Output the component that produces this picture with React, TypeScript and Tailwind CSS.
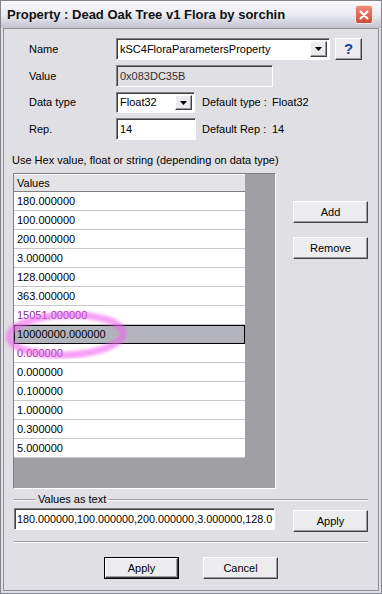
import React from "react";

const sunken =
  "border border-t-[#808080] border-l-[#808080] border-b-white border-r-white shadow-[inset_1px_1px_0_#404040]";
const raised =
  "border border-t-white border-l-white border-b-[#404040] border-r-[#404040] shadow-[inset_-1px_-1px_0_#9a9aa2] bg-[#ececef]";

const values = [
  "180.000000",
  "100.000000",
  "200.000000",
  "3.000000",
  "128.000000",
  "363.000000",
  "15051.000000",
  "10000000.000000",
  "0.000000",
  "0.000000",
  "0.100000",
  "1.000000",
  "0.300000",
  "5.000000",
];

const Arrow: React.FC = () => (
  <div className={`w-[17px] h-full flex items-center justify-center ${raised}`}>
    <svg width="7" height="4" viewBox="0 0 7 4">
      <polygon points="0,0 7,0 3.5,4" fill="#000" />
    </svg>
  </div>
);

const Btn: React.FC<{ label: string; className?: string }> = ({ label, className }) => (
  <div className={`w-[75px] h-[22px] flex items-center justify-center ${raised} ${className ?? ""}`}>
    {label}
  </div>
);

const Etched: React.FC<{ className?: string }> = ({ className }) => (
  <div className={`h-0 border-t border-b border-t-[#9d9da5] border-b-white ${className ?? ""}`} />
);

export default function App() {
  return (
    <div className="relative w-[382px] h-[594px] flex flex-col border border-[#84848c] bg-[#e0dfe3] text-[11px] text-black font-['Liberation_Sans',Arial,sans-serif]">
      {/* title bar */}
      <div className="h-[27px] shrink-0 flex items-center justify-between pl-[6px] pr-[8px] bg-linear-to-b from-[#fafafc] via-[#ebebf1] to-[#c3c3d1]">
        <span className="text-[13px] font-bold text-[#111] tracking-[0px]">
          Property : Dead Oak Tree v1 Flora by sorchin
        </span>
        <div className="w-[18px] h-[19px] rounded-[3px] border border-[#f4e4e0] bg-linear-to-b from-[#ec8b78] to-[#cf4a35] flex items-center justify-center">
          <svg width="10" height="10" viewBox="0 0 10 10">
            <path d="M1.5 1.5 L8.5 8.5 M8.5 1.5 L1.5 8.5" stroke="#fff" strokeWidth="2" strokeLinecap="round" />
          </svg>
        </div>
      </div>

      <div className="flex-1 flex px-[2px] pb-[2px]">
        <div className="flex-1 flex flex-col border border-[#8e8e96] bg-[#e0dfe3]">
          {/* form */}
          <div className="flex flex-col gap-[5px] pt-[9px]">
            <div className="h-[22px] flex items-center">
              <span className="w-[112px] pl-[25px]">Name</span>
              <div className={`w-[214px] h-[22px] bg-white flex items-center p-[2px] ${sunken}`}>
                <span className="flex-1 pl-[1px]">kSC4FloraParametersProperty</span>
                <Arrow />
              </div>
              <div className={`ml-[5px] w-[27px] h-[22px] flex items-center justify-center ${raised}`}>
                <span className="text-[15px] font-bold text-[#1c3fa8]">?</span>
              </div>
            </div>
            <div className="h-[22px] flex items-center">
              <span className="w-[112px] pl-[25px]">Value</span>
              <div className={`w-[157px] h-[22px] flex items-center pl-[3px] text-[#303030] ${sunken}`}>
                0x083DC35B
              </div>
            </div>
            <div className="h-[21px] flex items-center">
              <span className="w-[112px] pl-[25px]">Data type</span>
              <div className={`w-[79px] h-[21px] bg-white flex items-center p-[2px] ${sunken}`}>
                <span className="flex-1 pl-[1px]">Float32</span>
                <Arrow />
              </div>
              <span className="ml-[7px] w-[70px]">Default type :</span>
              <span>Float32</span>
            </div>
            <div className="h-[22px] flex items-center">
              <span className="w-[112px] pl-[25px]">Rep.</span>
              <div className={`w-[80px] h-[22px] bg-white flex items-center pl-[3px] ${sunken}`}>14</div>
              <span className="ml-[6px] w-[70px]">Default Rep :</span>
              <span>14</span>
            </div>
          </div>

          <div className="mt-[13px] pl-[8px] leading-[14px]">
            Use Hex value, float or string (depending on data type)
          </div>

          {/* list + side buttons */}
          <div className="flex mt-[6px] pl-[9px]">
            <div className="w-[263px] h-[316px] border border-t-[#808080] border-l-[#808080] border-b-white border-r-white bg-[#a0a0a4]">
              <div className="w-[231px] flex flex-col">
                <div className="h-[18px] flex items-center pl-[3px] bg-[#e3e3e6] border-t border-t-white border-b border-b-[#808080]">
                  Values
                </div>
                {values.map((v, i) =>
                  i === 7 ? (
                    <div key={i} className="h-[19px] flex items-center pl-[2px] bg-[#b2b4bb] border border-black">
                      {v}
                    </div>
                  ) : (
                    <div
                      key={i}
                      className={`h-[19px] flex items-center pl-[3px] bg-white border-b border-b-[#c8c8cc] ${
                        i === 6 || i === 8 ? "text-[#8a2a8a]" : ""
                      }`}
                    >
                      {v}
                    </div>
                  )
                )}
              </div>
            </div>
            <div className="ml-[17px] pt-[28px] flex flex-col gap-[14px]">
              <Btn label="Add" />
              <Btn label="Remove" />
            </div>
          </div>

          {/* values as text group */}
          <div className="mt-[4px] px-[10px] h-[13px] flex items-center">
            <Etched className="w-[22px]" />
            <span className="px-[2px] leading-[13px]">Values as text</span>
            <Etched className="flex-1" />
          </div>
          <div className="mt-[2px] px-[10px] flex items-start">
            <div className={`w-[261px] h-[22px] bg-white flex items-center pl-[2px] whitespace-nowrap text-[10.8px] ${sunken}`}>
              180.000000,100.000000,200.000000,3.000000,128.0
            </div>
            <Btn label="Apply" className="ml-[18px] mt-[2px]" />
          </div>
          <div className="mt-[9px] px-[10px]">
            <Etched />
          </div>

          <div className="mt-[14px] flex justify-center gap-[24px]">
            <div className="w-[75px] h-[22px] border border-black flex">
              <div className={`flex-1 flex items-center justify-center ${raised}`}>Apply</div>
            </div>
            <Btn label="Cancel" />
          </div>
        </div>
      </div>

      {/* hand-drawn highlight */}
      <svg className="absolute left-0 top-0 pointer-events-none" width="382" height="594">
        <defs>
          <filter id="soft">
            <feGaussianBlur stdDeviation="1.6" />
          </filter>
        </defs>
        <ellipse
          cx="65"
          cy="334"
          rx="57"
          ry="20"
          fill="none"
          stroke="#f060f0"
          strokeWidth="7"
          strokeOpacity="0.6"
          filter="url(#soft)"
          transform="rotate(-2 65 334)"
        />
      </svg>
    </div>
  );
}
